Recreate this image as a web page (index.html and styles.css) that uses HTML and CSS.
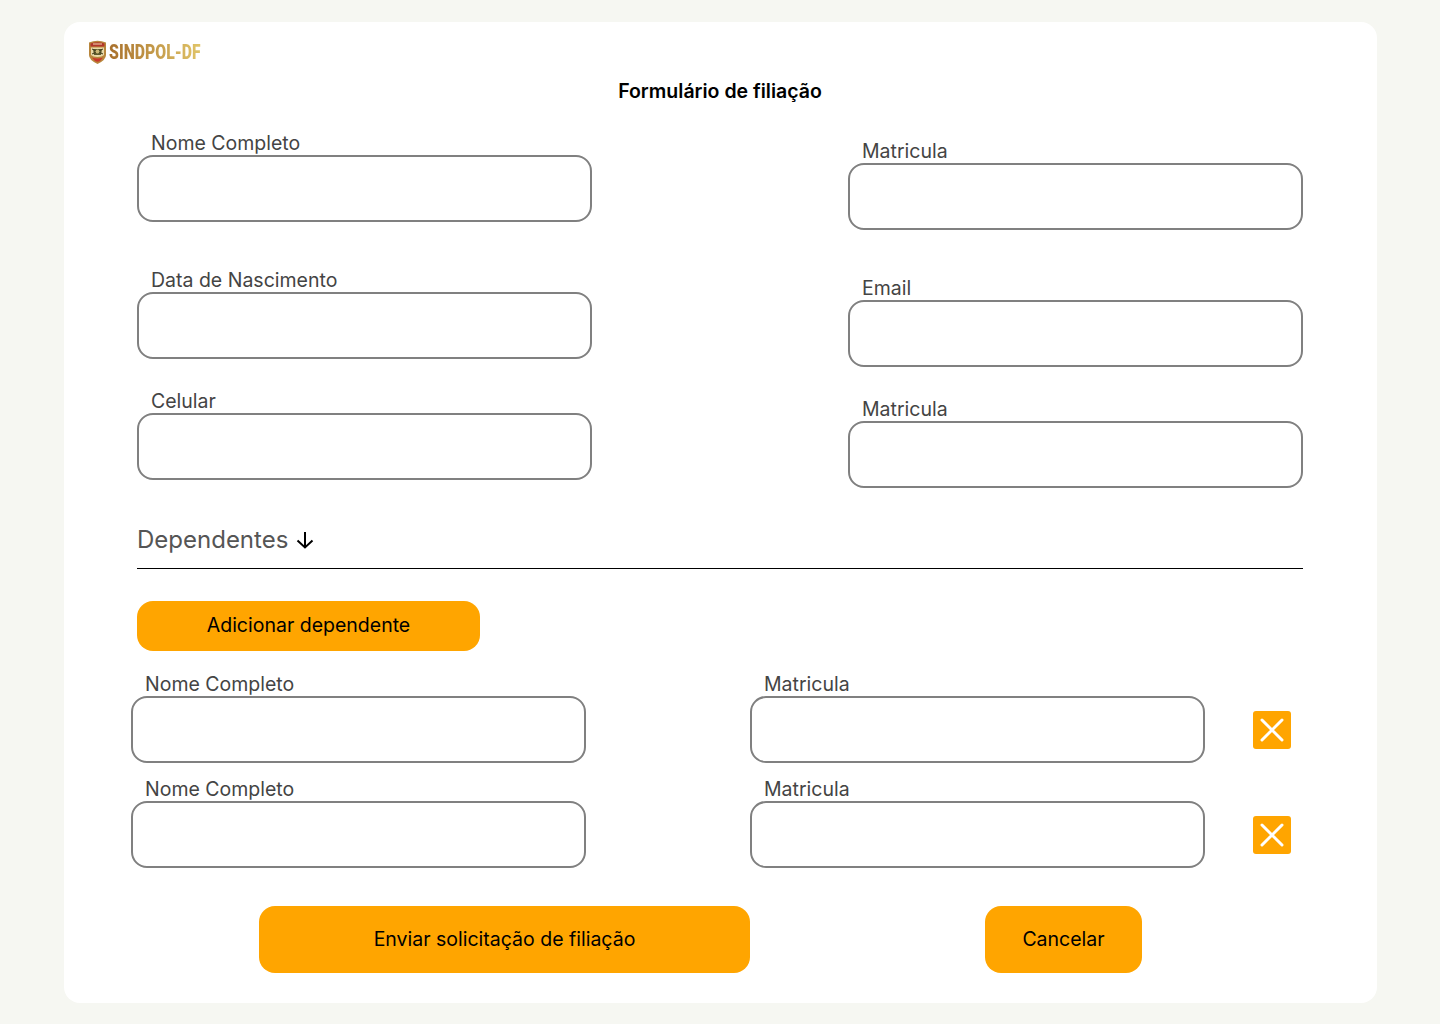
FILE: index.html
```html
<!DOCTYPE html>
<html lang="pt-BR">
<head>
  <meta charset="UTF-8" />
  <meta name="viewport" content="width=device-width, initial-scale=1.0"/>
  <title>Formulário de filiação</title>
  <link rel="stylesheet" href="styles.css">
</head>
<body>
  <main class="card">
    <div class="logo">
      <svg class="logo-badge" width="19" height="24" viewBox="0 0 19 24">
        <path d="M1 2.5 Q9.5 -1 18 2.5 L18 15 Q18 20 9.5 24 Q1 20 1 15 Z" fill="#b8863c"/>
        <path d="M2.5 3.5 Q9.5 0.8 16.5 3.5 L16.5 6.5 L2.5 6.5 Z" fill="#b3362b"/>
        <path d="M5 4 H14" stroke="#f0d9b0" stroke-width="1"/>
        <path d="M3 7.5 L16 7.5 L16 15 Q14 17 9.5 17 Q5 17 3 15 Z" fill="#e9d9a8"/>
        <path d="M5 9 L14 9 L13 15 L6 15 Z" fill="#5c5a2c"/>
        <path d="M4 9 L15 14 M15 9 L4 14" stroke="#3d3a1c" stroke-width="1"/>
        <circle cx="9.5" cy="11.5" r="2" fill="#c9b777"/>
        <path d="M4 17.5 Q9.5 19.5 15 17.5 L12 21 Q9.5 22.5 7 21 Z" fill="#c9372c"/>
      </svg>
      <span class="logo-text">SINDPOL-DF</span>
    </div>

    <h1 class="title">Formulário de filiação</h1>

    <div class="main-fields">
      <div class="col">
        <div class="field">
          <label>Nome Completo</label>
          <input type="text" />
        </div>
        <div class="field gap-lg">
          <label>Data de Nascimento</label>
          <input type="text" />
        </div>
        <div class="field gap-md">
          <label>Celular</label>
          <input type="text" />
        </div>
      </div>
      <div class="col col-right">
        <div class="field">
          <label>Matricula</label>
          <input type="text" />
        </div>
        <div class="field gap-lg">
          <label>Email</label>
          <input type="text" />
        </div>
        <div class="field gap-md">
          <label>Matricula</label>
          <input type="text" />
        </div>
      </div>
    </div>

    <div class="section-head">
      <span>Dependentes</span>
      <svg width="18" height="18" viewBox="0 0 18 18" fill="none" stroke="#000" stroke-width="2">
        <path d="M9 1 V16.5 M1.5 9.5 L9 16.5 L16.5 9.5"/>
      </svg>
    </div>

    <button class="btn btn-add">Adicionar dependente</button>

    <div class="dep-row">
      <div class="field">
        <label>Nome Completo</label>
        <input type="text" />
      </div>
      <div class="field">
        <label>Matricula</label>
        <input type="text" />
      </div>
      <button class="remove">
        <svg width="24" height="24" viewBox="0 0 24 24" stroke="#fff" stroke-width="3" stroke-linecap="round">
          <path d="M2 2 L22 22 M22 2 L2 22"/>
        </svg>
      </button>
    </div>
    <div class="dep-row dep-row-next">
      <div class="field">
        <label>Nome Completo</label>
        <input type="text" />
      </div>
      <div class="field">
        <label>Matricula</label>
        <input type="text" />
      </div>
      <button class="remove">
        <svg width="24" height="24" viewBox="0 0 24 24" stroke="#fff" stroke-width="3" stroke-linecap="round">
          <path d="M2 2 L22 22 M22 2 L2 22"/>
        </svg>
      </button>
    </div>

    <div class="actions">
      <button class="btn btn-send">Enviar solicitação de filiação</button>
      <button class="btn btn-cancel">Cancelar</button>
    </div>
  </main>
</body>
</html>
```

FILE: styles.css
```css
* {
  box-sizing: border-box;
}
body {
  background: #f6f7f2;
  margin: 0;
  font-family: Inter, 'Noto Sans', sans-serif;
}
.card {
  background: #fff;
  width: 1313px;
  height: 981px;
  margin: 22px 0 0 64px;
  padding: 18px 74px 0 73px;
  border-radius: 16px;
}
.logo {
  display: flex;
  align-items: center;
  gap: 2px;
  height: 24px;
  margin-left: -49px;
}
.logo-text {
  font-family: Roboto, sans-serif;
  font-weight: 900;
  font-size: 20.5px;
  line-height: 24px;
  background: linear-gradient(90deg, #a8702c, #e0c468);
  -webkit-background-clip: text;
  background-clip: text;
  color: transparent;
  transform: scaleX(0.77);
  transform-origin: left center;
}
.title {
  margin: 15px 0 0;
  font-size: 19.5px;
  line-height: 24px;
  font-weight: 600;
  text-align: center;
  color: #000;
}
.main-fields {
  display: flex;
  justify-content: space-between;
  margin-top: 30px;
}
.col {
  width: 455px;
}
.col-right {
  padding-top: 8px;
}
.field {
  width: 455px;
}
.gap-lg {
  margin-top: 48px;
}
.gap-md {
  margin-top: 32px;
}
label {
  display: block;
  height: 22px;
  padding-left: 14px;
  font-size: 19.5px;
  line-height: 20px;
  color: #444;
}
input {
  display: block;
  width: 100%;
  height: 67px;
  background: #fff;
  border: 2px solid #808080;
  border-radius: 16px;
}
.section-head {
  display: flex;
  align-items: center;
  gap: 8px;
  height: 48px;
  margin-top: 33px;
  padding-bottom: 10px;
  font-size: 24px;
  color: #555;
  border-bottom: 1px solid #000;
}
.btn {
  padding: 0 0 2px;
  background: #ffa500;
  color: #000;
  border: none;
  border-radius: 16px;
  font-family: Inter, sans-serif;
  font-size: 19.5px;
}
.btn-add {
  display: block;
  width: 343px;
  height: 50px;
  margin-top: 32px;
}
.dep-row {
  display: flex;
  align-items: flex-start;
  margin: 23px 0 0 -6px;
}
.dep-row-next {
  margin-top: 16px;
}
.dep-row .field + .field {
  margin-left: 164px;
}
.remove {
  display: flex;
  align-items: center;
  justify-content: center;
  width: 38px;
  height: 38px;
  margin: 37px 0 0 48px;
  padding: 0;
  background: #ffa500;
  border: none;
  border-radius: 3px;
}
.actions {
  display: flex;
  margin: 38px 0 0 122px;
}
.btn-send {
  width: 491px;
  height: 67px;
}
.btn-cancel {
  width: 157px;
  height: 67px;
  margin-left: 235px;
}
```
